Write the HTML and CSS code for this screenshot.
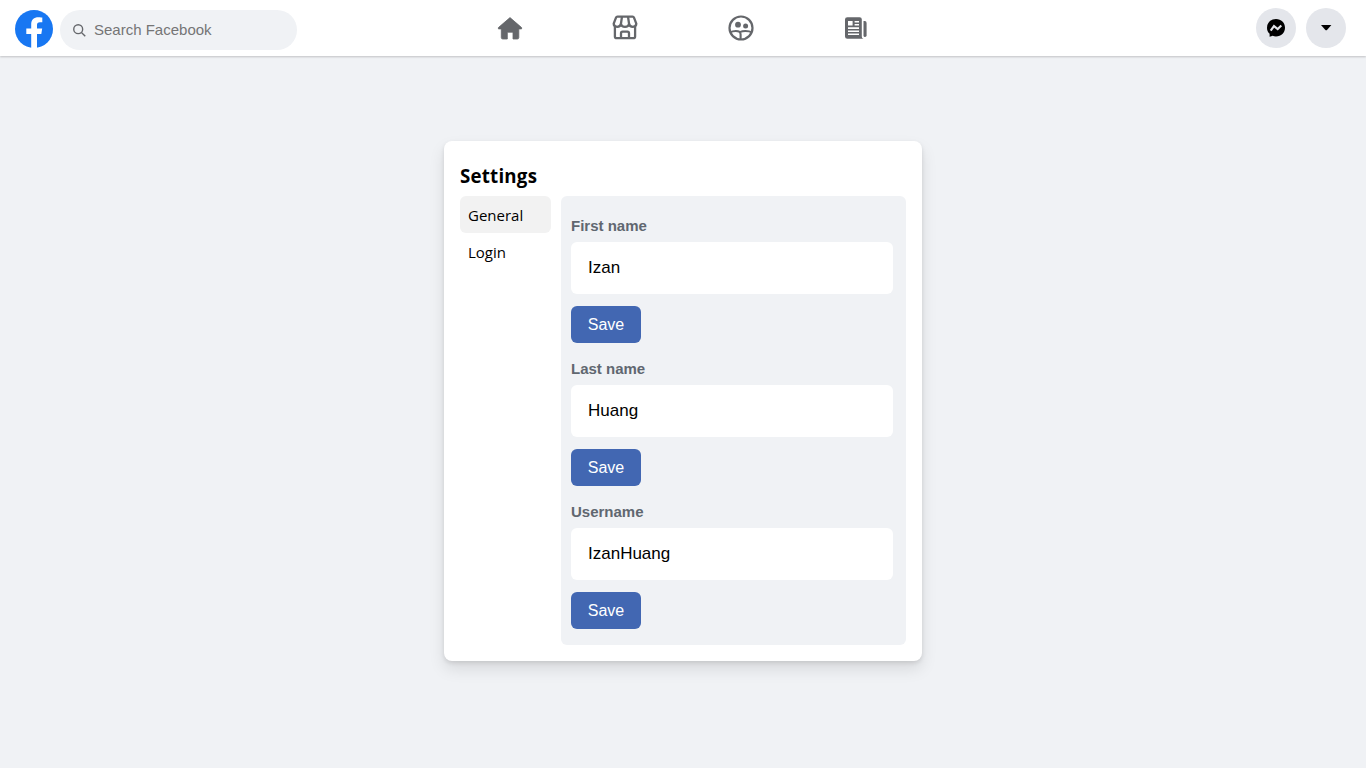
FILE: index.html
```html
<!DOCTYPE html>
<html lang="en">
<head>
<meta charset="utf-8">
<title>Settings</title>
<link rel="stylesheet" href="styles.css">
</head>
<body>
<header class="topbar">
  <div class="brand">
    <svg class="logo" viewBox="0 0 38 38"><circle cx="19" cy="19" r="19" fill="#1877f2"/><path d="M16.2 38V24.1H11.3V18.4H16.2V14.4C16.2 9.7 19 7.2 23.4 7.2C25.4 7.2 27.3 7.6 27.3 7.6V12.3H25C22.7 12.3 22 13.6 22 15.1V18.4H27.2L26.3 24.1H22V38Z" fill="#fff"/></svg>
    <label class="search">
      <svg viewBox="0 0 14 14"><circle cx="5.6" cy="5.6" r="4.8"/><path d="M9.1 9.1L13.2 13.2"/></svg>
      <input type="text" placeholder="Search Facebook">
    </label>
  </div>
  <nav class="nav">
    <a><svg viewBox="0 0 26 26"><path d="M13 2.6L24.6 12.6V13.9H21.8V22.6Q21.8 24 20.4 24H16V17.2H10.3V24H5.7Q4.3 24 4.3 22.6V13.9H1.4V12.6Z" fill="#65676b" stroke="#65676b" stroke-width=".8" stroke-linejoin="round"/></svg></a>
    <a><svg viewBox="0 .6 26 26" fill="none" stroke="#65676b" stroke-width="2.3" stroke-linejoin="round"><path d="M5.4 2.2H20.6Q21.6 2.2 22 3.2L24.3 9.2Q24.3 12.4 20.9 12.4Q17.5 12.4 17.1 9.6Q16.5 12.4 13 12.4Q9.5 12.4 8.9 9.6Q8.5 12.4 5.1 12.4Q1.7 12.4 1.7 9.2L4 3.2Q4.4 2.2 5.4 2.2Z"/><path d="M10 2.2L8.9 9.6M16 2.2L17.1 9.6M2.9 12V22Q2.9 23.8 4.9 23.8H21.1Q23.1 23.8 23.1 22V12M9 23.8V19Q9 17.3 10.6 17.3H15.4Q17 17.3 17 19V23.8"/></svg></a>
    <a><svg viewBox="0 0 26 26"><circle cx="13" cy="13" r="11.5" fill="none" stroke="#65676b" stroke-width="2.2"/><g fill="#65676b"><circle cx="10" cy="9.7" r="2.9"/><circle cx="17.6" cy="11" r="2.5"/></g><path d="M2 17.4Q4.6 16 7.8 16Q12.6 16 12.6 19.4V24.4M12 17.2Q14.2 16 17.4 16Q21.4 16 24 17.4" fill="none" stroke="#65676b" stroke-width="2.1"/></svg></a>
    <a><svg viewBox="0 0 26 26"><path fill="#65676b" fill-rule="evenodd" d="M4.4 2.3H16.6Q18.8 2.3 18.8 4.3V21.6Q18.8 23.4 20.4 23.8H4.4Q2 23.8 2 21.4V4.4Q2 2.3 4.4 2.3ZM5 6V10.6H9.6V6ZM11.6 6V7.6H16V6ZM11.6 9V10.6H16V9ZM5 12.3V13.9H16V12.3ZM5 15.5V17.1H16V15.5ZM5 18.5V20.1H16V18.5Z"/><path fill="#65676b" d="M20.5 6H21.8Q23.6 6 23.6 8V20.2Q23.6 22 22 22Q20.5 22 20.5 20.4Z"/></svg></a>
  </nav>
  <div class="actions">
    <button class="round"><svg viewBox="0 0 20 20"><path d="M10 1C4.8 1 1 4.8 1 9.7C1 12.2 1.7 14 3.6 15.8V18.8L6.6 17.8Q8.2 18.6 10 18.6C15.2 18.6 19 14.6 19 9.8C19 4.8 15.2 1 10 1Z"/><path d="M4.7 12.6L8 8.1L11.7 11L15.3 7.6" fill="none" stroke="#e4e6eb" stroke-width="2.1"/></svg></button>
    <button class="round"><svg viewBox="0 0 20 20"><path d="M5 7H15.4L11.2 11.7Q10.2 12.8 9.2 11.7Z"/></svg></button>
  </div>
</header>
<main class="page">
  <section class="card">
    <h1>Settings</h1>
    <div class="columns">
      <div class="tabs"><a class="tab active">General</a><a class="tab">Login</a></div>
      <div class="panel">
        <form class="field"><label>First name</label><input type="text" value="Izan"><button type="button">Save</button></form>
        <form class="field"><label>Last name</label><input type="text" value="Huang"><button type="button">Save</button></form>
        <form class="field"><label>Username</label><input type="text" value="IzanHuang"><button type="button">Save</button></form>
      </div>
    </div>
  </section>
</main>
</body>
</html>
```

FILE: styles.css
```css
* { box-sizing: border-box; }
body {
  margin: 0;
  height: 768px;
  overflow: hidden;
  background: #f0f2f5;
  font-family: "Liberation Sans", Arial, sans-serif;
}
svg { display: block; }
button, input { border: 0; padding: 0; font-family: inherit; outline: 0; }
.topbar {
  display: grid;
  grid-template-columns: 1fr 462px 1fr;
  height: 56px;
  background: #fff;
  box-shadow: 0 1px 2px rgba(0, 0, 0, .2);
}
.brand { display: flex; gap: 7px; padding: 10px 0 0 15px; }
.logo { width: 38px; height: 38px; }
.search {
  display: flex;
  align-items: center;
  gap: 8px;
  width: 237px;
  height: 40px;
  padding-left: 13px;
  border-radius: 20px;
  background: #f0f2f5;
}
.search svg { width: 13px; height: 13px; fill: none; stroke: #65676b; stroke-width: 1.5; }
.search input { width: 180px; padding-bottom: 2px; background: none; font-size: 15px; }
.search input::placeholder { color: #757575; }
.nav { display: grid; grid-template-columns: repeat(4, 1fr); }
.nav a { display: flex; align-items: center; justify-content: center; }
.nav svg { width: 26px; height: 26px; }
.actions { display: flex; justify-content: flex-end; gap: 10px; padding: 8px 20px 0 0; }
.round {
  display: flex;
  align-items: center;
  justify-content: center;
  width: 40px;
  height: 40px;
  border-radius: 50%;
  background: #e4e6eb;
}
.round svg { width: 20px; height: 20px; }
.page { display: flex; justify-content: center; padding-top: 85px; }
.card {
  width: 478px;
  height: 520px;
  padding: 16px;
  border-radius: 8px;
  background: #fff;
  box-shadow: 0 2px 4px rgba(0, 0, 0, .1), 0 8px 16px rgba(0, 0, 0, .1);
}
.card h1 {
  margin: 0;
  height: 39px;
  font: bold 18.7px/38px "Open Sans", "Noto Sans", sans-serif;
  letter-spacing: .22px;
}
.columns { display: flex; gap: 10px; }
.tabs { width: 91px; }
.tab {
  display: block;
  height: 37px;
  padding-left: 8px;
  border-radius: 6px;
  font: 15px/38px "Open Sans", "Noto Sans", sans-serif;
}
.active { background: #f2f2f2; }
.panel {
  width: 345px;
  height: 449px;
  padding: 20px 13px 0 10px;
  border-radius: 6px;
  background: #f0f2f5;
}
.field { display: flex; flex-direction: column; align-items: flex-start; height: 143px; }
.field label {
  height: 26px;
  color: #606770;
  font-size: 15px;
  font-weight: bold;
  line-height: 20px;
}
.field input {
  width: 100%;
  height: 52px;
  margin-bottom: 12px;
  padding-left: 17px;
  border-radius: 6px;
  background: #fff;
  color: #000;
  font-size: 17px;
}
.field button {
  width: 70px;
  height: 37px;
  border-radius: 6px;
  background: #4267b2;
  color: #fff;
  font-size: 16px;
}
```
